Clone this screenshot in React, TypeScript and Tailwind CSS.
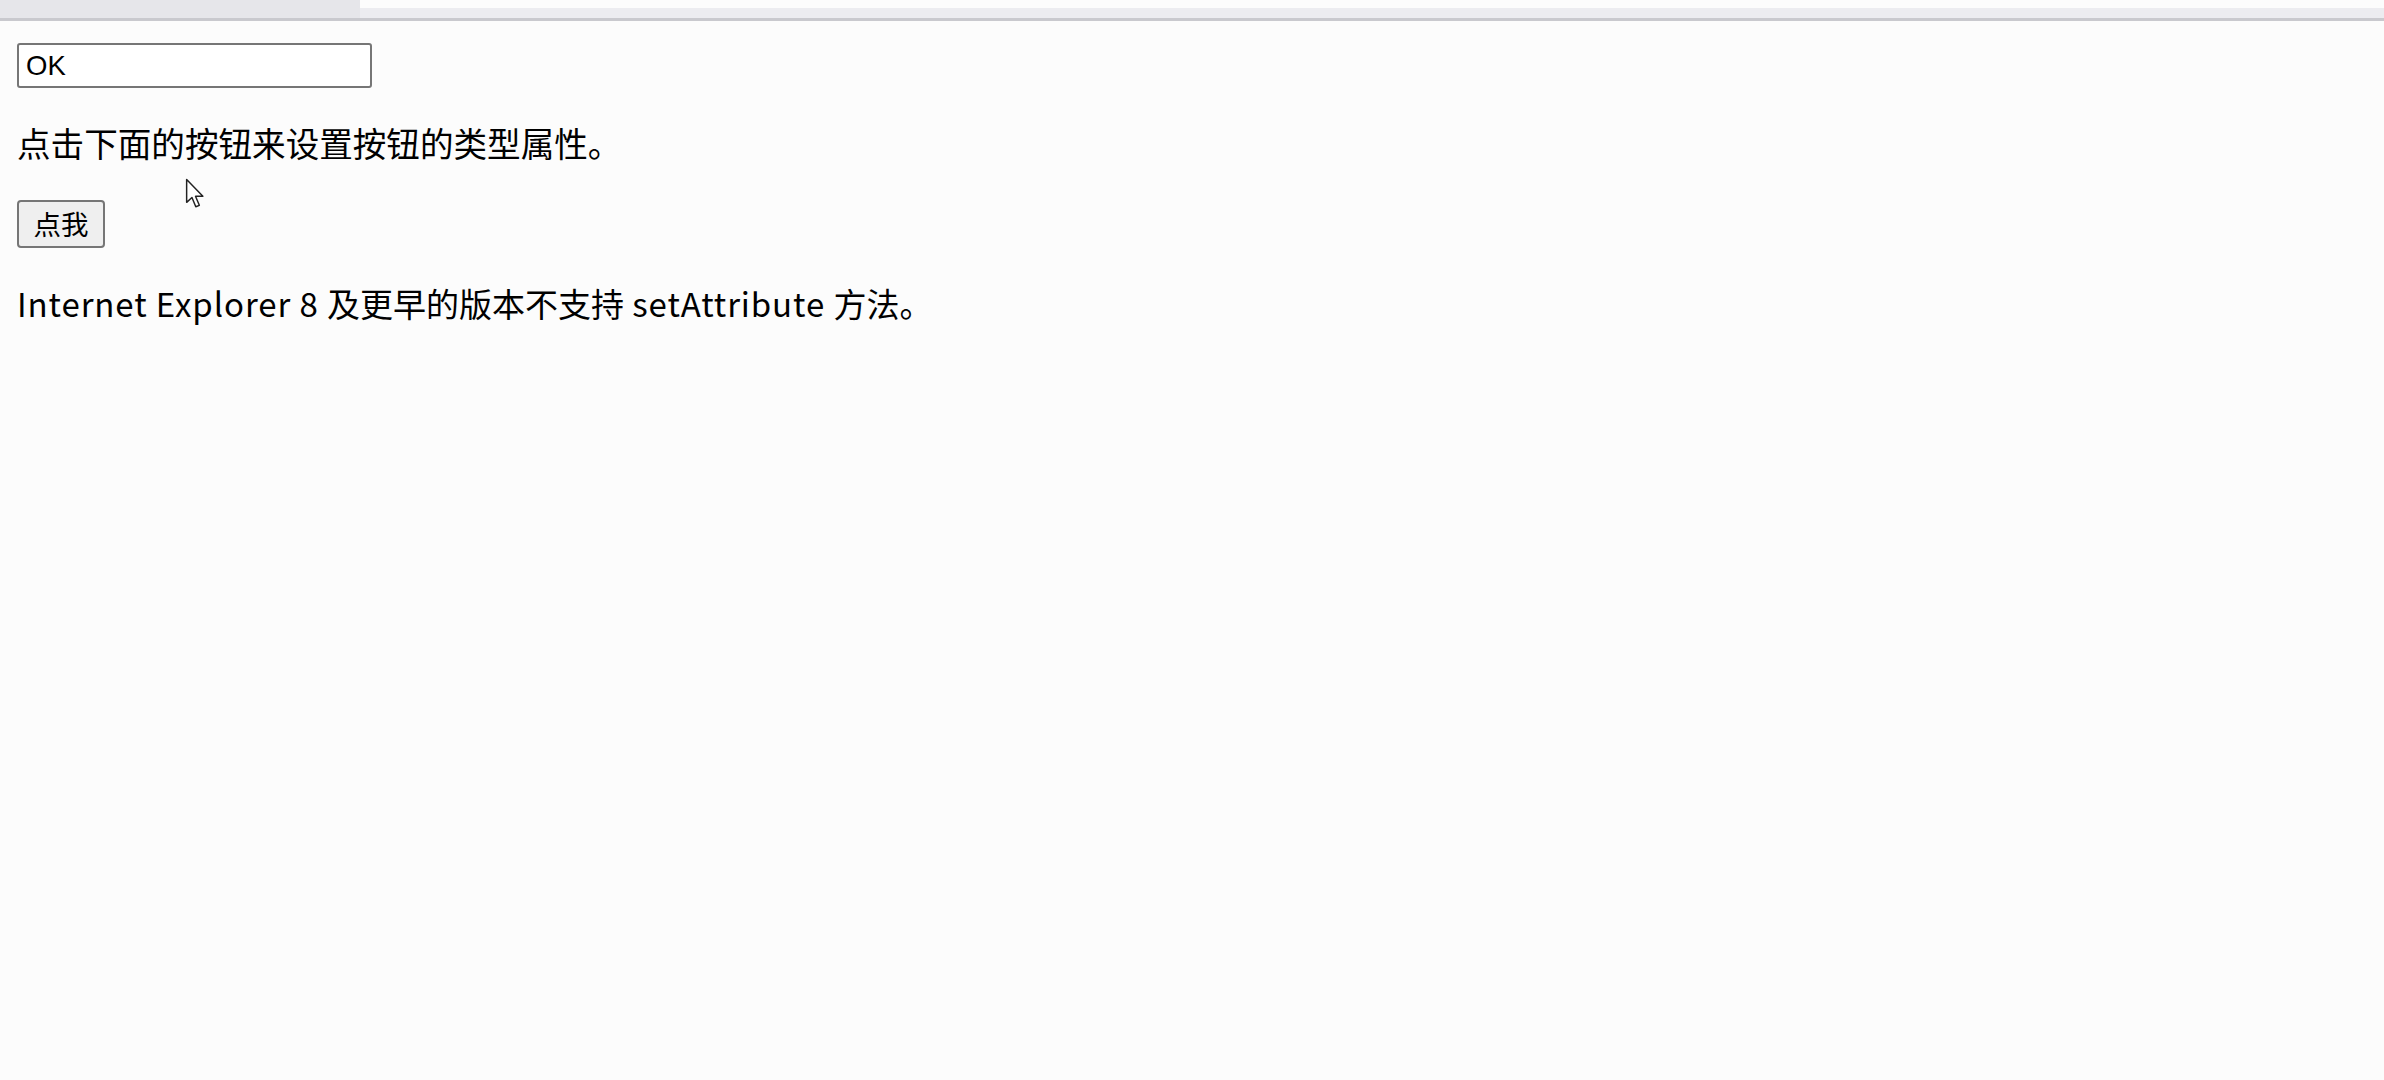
export default function App() {
    const cjk = { fontFamily: '"Noto Sans CJK SC", "Liberation Sans", sans-serif' };
    return (
        <div className="relative min-h-screen bg-[#fcfcfc] text-black">
            {/* browser chrome strip */}
            <div className="flex h-[21px] border-b-[3px] border-[#c9c9ce]">
                <div className="w-[360px] bg-[#e6e6ea]" />
                <div className="flex-1 flex flex-col">
                    <div className="h-[8px] bg-[#fcfcfc]" />
                    <div className="flex-1 bg-[#ececf0]" />
                </div>
            </div>

            <div className="px-[17px] pt-[22px]">
                <input
                    type="text"
                    defaultValue="OK"
                    className="block w-[355px] h-[45px] px-[7px] border-2 border-[#767676] rounded-[3px] bg-white text-[27.5px] text-black outline-none"
                    style={{ fontFamily: '"Liberation Sans", Arial, sans-serif' }}
                />
                <p className="mt-[33px] text-[33.6px] leading-[44px]" style={cjk}>
                    点击下面的按钮来设置按钮的类型属性。
                </p>
                <button
                    className="mt-[35px] block w-[88px] h-[48px] border-2 border-[#767676] rounded-[4px] bg-[#efefef] text-[27.5px] leading-none text-black"
                    style={cjk}
                >
                    点我
                </button>
                <p className="mt-[33px] text-[33px] leading-[44px]" style={cjk}>
                    <span className="tracking-[0.9px]">Internet Explorer 8 </span>
                    及更早的版本不支持
                    <span className="tracking-[0.9px]"> setAttribute </span>
                    方法。
                </p>
            </div>

            {/* mouse pointer */}
            <svg className="absolute left-[185px] top-[178px]" width="21" height="31" viewBox="0 0 14 21">
                <path d="M1 1 L1 16.5 L4.6 13.2 L7.2 19.5 L9.6 18.5 L7 12.4 L12 12.4 Z" fill="white" stroke="#222" strokeWidth="1" strokeLinejoin="round" />
            </svg>
        </div>
    );
}
